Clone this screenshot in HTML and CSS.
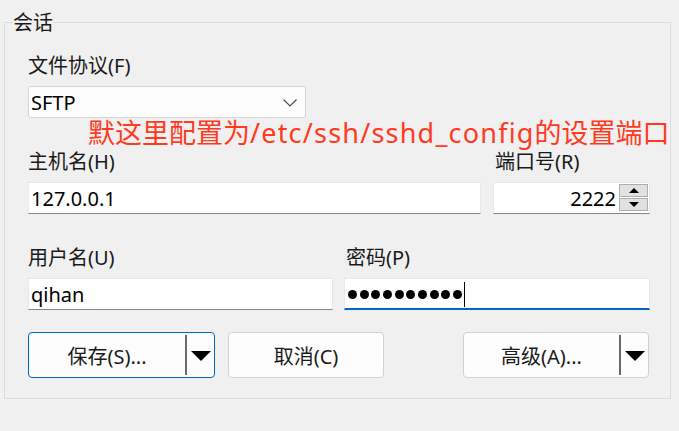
FILE: index.html
```html
<!DOCTYPE html>
<html lang="zh-CN">
<head>
<meta charset="utf-8">
<title>会话</title>
<link rel="stylesheet" href="styles.css">
</head>
<body>
<div class="page">
  <fieldset class="session">
    <legend>会话</legend>
    <div class="content">
      <div class="field proto">
        <div class="label">文件协议(F)</div>
        <div class="combo">
          <span class="combo-text">SFTP</span>
          <svg class="chevron" width="14" height="8" viewBox="0 0 14 8"><polyline points="0.5,0.5 7,7 13.5,0.5" fill="none" stroke="#4a4a4a" stroke-width="1.1"/></svg>
        </div>
      </div>
      <div class="row host-row">
        <div class="field host">
          <div class="label">主机名(H)</div>
          <div class="input">127.0.0.1</div>
        </div>
        <div class="field port">
          <div class="label label-in">端口号(R)</div>
          <div class="input spin">
            <span class="spin-val">2222</span>
            <div class="spin-btns">
              <span class="spin-btn"><span class="tri-up"></span></span>
              <span class="spin-btn"><span class="tri-down"></span></span>
            </div>
          </div>
        </div>
      </div>
      <div class="row cred-row">
        <div class="field user">
          <div class="label">用户名(U)</div>
          <div class="input">qihan</div>
        </div>
        <div class="field pass">
          <div class="label label-in">密码(P)</div>
          <div class="input focused">
            <span class="dots"><i></i><i></i><i></i><i></i><i></i><i></i><i></i><i></i><i></i><i></i></span>
            <span class="caret"></span>
          </div>
        </div>
      </div>
      <div class="buttons">
        <div class="btn split-btn default save">
          <span class="btn-main">保存(S)...</span>
          <span class="btn-sep"></span>
          <span class="btn-arrow"><span class="tri-down big"></span></span>
        </div>
        <div class="btn cancel"><span class="btn-main">取消(C)</span></div>
        <div class="btn split-btn advanced">
          <span class="btn-main">高级(A)...</span>
          <span class="btn-sep"></span>
          <span class="btn-arrow"><span class="tri-down big"></span></span>
        </div>
      </div>
    </div>
  </fieldset>
  <div class="note">默这里配置为<span class="note-latin">/etc/ssh/sshd_config</span>的设置端口</div>
</div>
</body>
</html>
```

FILE: styles.css
```css
* { box-sizing: border-box; }
html, body { margin: 0; padding: 0; }
body {
  width: 679px;
  height: 431px;
  overflow: hidden;
  background: #f0f0f0;
  font-family: "Noto Sans", "Noto Sans CJK SC", sans-serif;
  font-size: 20px;
  color: #1a1a1a;
}
.page {
  position: relative;
  padding: 10px 0 0 4px;
}
.session {
  margin: 0;
  width: 667px;
  min-inline-size: 0;
  border: 1px solid #dcdcdc;
  padding: 19px 20px 20px 8px;
}
.session legend {
  padding: 0;
  margin: 0;
  line-height: 25px;
  font-size: 20px;
  color: #1a1a1a;
}
.content { padding-left: 15px; }
.field { display: flex; flex-direction: column; }
.label {
  line-height: 24px;
  height: 24px;
  margin-bottom: 8px;
  white-space: nowrap;
}
.label-in { padding-left: 2px; }
.proto { width: 278px; margin-bottom: 32px; }
.combo {
  height: 32px;
  background: #fdfdfd;
  border: 1px solid #d5d5d5;
  border-radius: 3px;
  display: flex;
  align-items: center;
  justify-content: space-between;
  padding: 0 8px 0 2px;
  color: #000;
}
.chevron { margin-top: 2px; }
.row { display: flex; }
.host-row { gap: 12px; margin-bottom: 32px; }
.host { width: 453px; }
.port { width: 157px; }
.cred-row { gap: 11px; margin-bottom: 22px; }
.user { width: 305px; }
.pass { width: 306px; }
.input {
  height: 32px;
  background: #fff;
  border: 1px solid #e8e8e8;
  border-bottom-color: #868686;
  display: flex;
  align-items: center;
  padding: 0 2px;
  color: #000;
  white-space: nowrap;
}
.input.focused {
  border-bottom: 2px solid #0067c0;
  padding-left: 3px;
}
.spin { padding: 0 1px 0 2px; align-items: stretch; }
.spin-val {
  flex: 1;
  text-align: right;
  margin-right: 3px;
  display: flex;
  align-items: center;
  justify-content: flex-end;
}
.spin-btns {
  width: 29px;
  display: flex;
  flex-direction: column;
  gap: 1px;
  padding-top: 1px;
}
.spin-btn {
  height: 13px;
  background: #e1e1e1;
  border: 1px solid #adadad;
  display: flex;
  align-items: center;
  justify-content: center;
}
.tri-up {
  width: 0; height: 0;
  border-left: 5px solid transparent;
  border-right: 5px solid transparent;
  border-bottom: 5px solid #000;
}
.tri-down {
  width: 0; height: 0;
  border-left: 5px solid transparent;
  border-right: 5px solid transparent;
  border-top: 5px solid #000;
}
.tri-down.big {
  border-left-width: 10px;
  border-right-width: 10px;
  border-top-width: 10px;
}
.dots { display: flex; gap: 2.67px; margin-top: 2px; }
.dots i {
  display: block;
  width: 9px;
  height: 9px;
  border-radius: 50%;
  background: #000;
}
.caret {
  width: 1px;
  height: 25px;
  background: #000;
  margin-left: 2px;
  margin-top: 2px;
}
.buttons { display: flex; }
.btn {
  height: 46px;
  background: #fdfdfd;
  border: 1px solid #d0d0d0;
  border-radius: 4px;
  display: flex;
  align-items: stretch;
  color: #1a1a1a;
}
.btn.default { border-color: #0067c0; }
.btn-main {
  flex: 1;
  display: flex;
  align-items: center;
  justify-content: center;
  white-space: nowrap;
}
.btn-sep {
  width: 2px;
  background: #6b6b6b;
  margin: 2px 0 2px;
}
.btn-arrow {
  width: 27px;
  display: flex;
  align-items: center;
  justify-content: center;
  padding-top: 1px;
}
.save { width: 187px; }
.cancel { width: 156px; margin-left: 13px; }
.advanced { width: 186px; margin-left: auto; margin-right: 1px; }
.note {
  position: absolute;
  left: 88px;
  top: 114px;
  font-family: "Noto Sans CJK SC", sans-serif;
  font-size: 27px;
  line-height: 36px;
  color: #ff3a1f;
  white-space: nowrap;
}
.note-latin {
  font-family: "Noto Sans", sans-serif;
  letter-spacing: 1.2px;
}
```
